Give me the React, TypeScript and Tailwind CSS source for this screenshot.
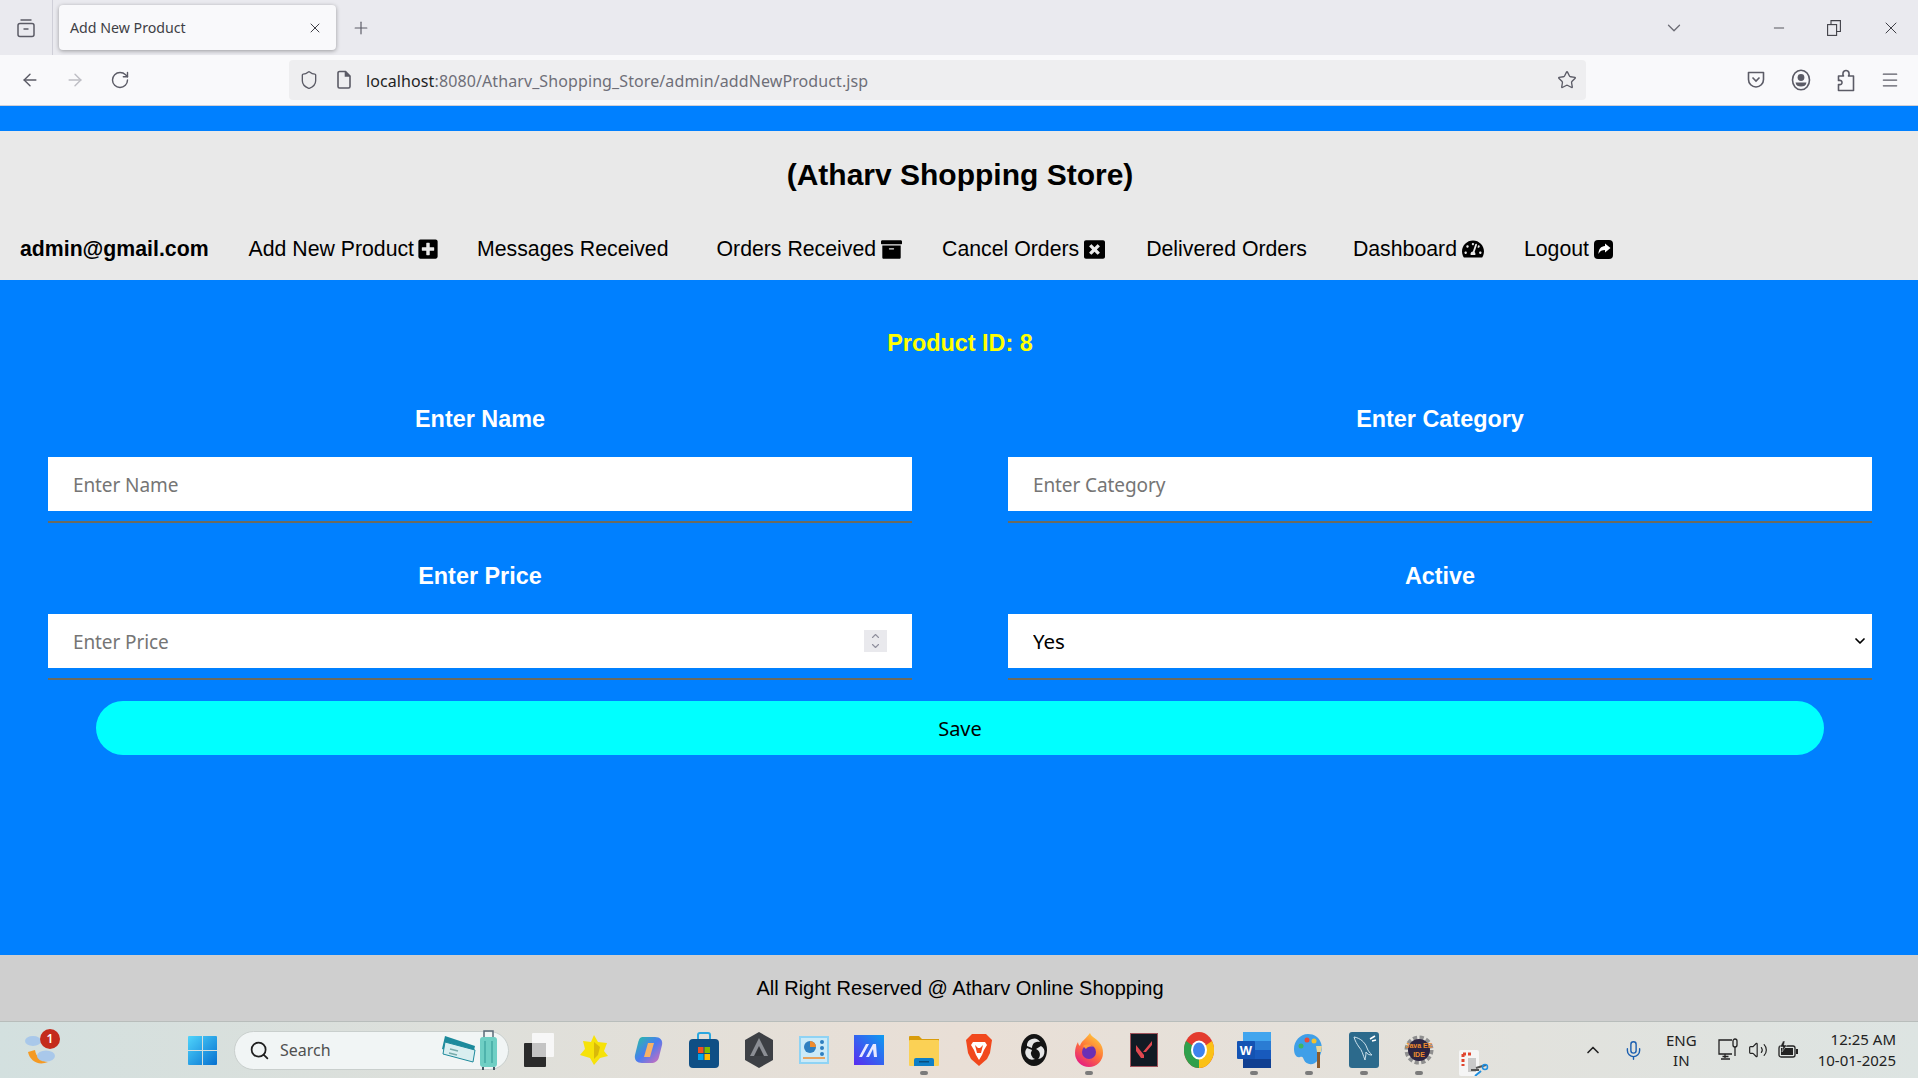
import { ArrowLeft, ArrowRight, ChevronDown, ChevronUp, Menu, Mic, Minus, Plus, RotateCw, Search, Shield, Star, Volume2, X } from "lucide-react";
import { FaArchive, FaPlusSquare, FaTachometerAlt, FaWindowClose } from "react-icons/fa";

const chromeFont = "font-['Noto_Sans',sans-serif]";

function TabsIcon() {
  return (
    <svg width="20" height="20" viewBox="0 0 20 20" fill="none" stroke="#5b5b66" strokeWidth="1.5">
      <rect x="2" y="5.5" width="16" height="13" rx="2" />
      <path d="M4.5 2h11M7.5 11h5" />
    </svg>
  );
}

function RestoreIcon() {
  return (
    <svg width="14" height="16" viewBox="0 0 14 16" fill="none" stroke="#3f3f46" strokeWidth="1.1">
      <rect x="0.600" y="4.600" width="9" height="10.800" />
      <path d="M4 4.500V.6h9.400v10.900H9.600" />
    </svg>
  );
}

function PageIcon() {
  return (
    <svg width="18" height="20" viewBox="0 0 18 20" fill="none" stroke="#5b5b66" strokeWidth="1.6">
      <path d="M3 3a1.5 1.5 0 0 1 1.5-1.5h6l4.500 4.500v10.500a1.500 1.500 0 0 1-1.500 1.500h-9a1.500 1.500 0 0 1-1.500-1.500z" />
      <path d="M10.500 1.500v4.500h4.500" fill="#5b5b66" />
    </svg>
  );
}

function PocketIcon() {
  return (
    <svg width="20" height="20" viewBox="0 0 20 20" fill="none" stroke="#5b5b66" strokeWidth="1.6">
      <path d="M2.500 2.500h15v7a7.500 7.500 0 0 1-15 0z" strokeLinejoin="round" />
      <path d="M6.500 7.500 10 11l3.500-3.500" />
    </svg>
  );
}

function AccountIcon() {
  return (
    <svg width="20" height="22" viewBox="0 0 20 22" fill="none">
      <ellipse cx="10" cy="11" rx="8.500" ry="9.800" stroke="#5b5b66" strokeWidth="1.600" />
      <circle cx="10" cy="8.500" r="3.400" fill="#5b5b66" />
      <path d="M4.500 13.500h11c-.5 3-2.500 4-5.500 4s-5-1-5.500-4z" fill="#5b5b66" />
    </svg>
  );
}

function PuzzleIcon() {
  return (
    <svg width="18" height="24" viewBox="0 0 18 24" fill="none" stroke="#5b5b66" strokeWidth="1.600" strokeLinejoin="round">
      <path d="M1.500 8h5c-1-1.500-1-5.500 2.500-5.500s3.500 4 2.500 5.500h5v14.500h-15v-6c3 .5 3.500-.8 3.500-2s-.5-2.500-3.500-2z" />
    </svg>
  );
}

// solid square with the curved arrow, the logout one in the nav
function LogoutIcon() {
  return (
    <svg width="19" height="19" viewBox="0 0 19 19">
      <rect width="19" height="19" rx="4" fill="#000" />
      <path d="M11 3.500 16.500 8 11 12.500V10c-3 0-5 .8-6.500 4C4.500 9 7 6.200 11 6z" fill="#fff" />
    </svg>
  );
}

function WindowsLogo() {
  return (
    <svg width="29" height="29" viewBox="0 0 29 29">
      <defs>
        <linearGradient id="win" x1="0" y1="0" x2="1" y2="1">
          <stop offset="0" stopColor="#4fd4fb" />
          <stop offset="1" stopColor="#0670d0" />
        </linearGradient>
      </defs>
      <path d="M0 1a1 1 0 0 1 1-1h13v14H0zM15 0h13a1 1 0 0 1 1 1v13H15zM0 15h14v14H1a1 1 0 0 1-1-1zM15 15h14v13a1 1 0 0 1-1 1H15z" fill="url(#win)" />
    </svg>
  );
}

function WeatherIcon() {
  return (
    <svg width="34" height="36" viewBox="0 0 34 36">
      <path d="M4 20c2 9 10 14 20 10-7-1-12-5-13-12z" fill="#f59a23" />
      <ellipse cx="9" cy="9" rx="8" ry="5" fill="#a9c8ea" />
      <ellipse cx="22" cy="24" rx="9" ry="5.500" fill="#a9c8ea" />
    </svg>
  );
}

function TicketsIcon() {
  return (
    <svg width="58" height="42" viewBox="0 0 58 42">
      <path d="M3 7 33 17l-3 13L0 20z" fill="#1d8a9c" />
      <path d="M3 13 33 21l-2 12L1 25z" fill="#d9eef0" stroke="#1d8a9c" />
      <path d="M8 20l8 2M7 24l8 2" stroke="#7aa" strokeWidth="1.500" />
      <rect x="38" y="8" width="17" height="30" rx="3" fill="#6fcfc4" />
      <path d="M42 8V2h9v6" fill="none" stroke="#5b6b78" strokeWidth="1.500" />
      <path d="M43 12v22M50 12v22" stroke="#46aaa4" strokeWidth="1.500" />
      <path d="M41 38v3M52 38v3" stroke="#4a5a66" strokeWidth="2" />
    </svg>
  );
}

function SnapIcon() {
  return (
    <svg width="30" height="34" viewBox="0 0 30 34">
      <rect x="8" y="0" width="22" height="24" rx="1" fill="#f7f7f7" />
      <rect x="0" y="10" width="22" height="24" rx="1" fill="#2b2b2b" />
      <rect x="8" y="10" width="14" height="14" fill="#c4c4c4" />
    </svg>
  );
}

function StarAppIcon() {
  return (
    <svg width="28" height="30" viewBox="0 0 28 30">
      <path d="M14 0l4 7 9 1-3 8 4 5-8 2-6 7-4-7-10-3 5-6-2-8 8 1z" fill="#f6e20a" />
      <path d="M14 7l6 5-2 8-4 4z" fill="#d9b90a" />
    </svg>
  );
}

function CopilotIcon() {
  return (
    <svg width="30" height="30" viewBox="0 0 30 30">
      <defs>
        <linearGradient id="cop" x1="0" y1="0" x2="1" y2="1">
          <stop offset="0" stopColor="#25c2a0" />
          <stop offset="0.5" stopColor="#4a7cf0" />
          <stop offset="1" stopColor="#e56ab3" />
        </linearGradient>
      </defs>
      <path d="M9 2h12c5 0 8 3 7 8l-3 12c-1 4-4 6-8 6H8c-5 0-8-3-7-8l3-12C5 4 6 2 9 2z" fill="url(#cop)" />
      <path d="M10 22l4-14h6l-4 14z" fill="#f7b267" />
    </svg>
  );
}

function StoreIcon() {
  return (
    <svg width="30" height="36" viewBox="0 0 30 36">
      <path d="M9 8V3a2 2 0 0 1 2-2h8a2 2 0 0 1 2 2v5" fill="none" stroke="#2aa7e0" strokeWidth="2" />
      <rect x="0" y="7" width="30" height="29" rx="4" fill="#0f4f85" />
      <rect x="9" y="15" width="5.500" height="6" fill="#f25022" />
      <rect x="15.500" y="15" width="5.500" height="6" fill="#7fba00" />
      <rect x="9" y="22" width="5.500" height="6" fill="#00a4ef" />
      <rect x="15.500" y="22" width="5.500" height="6" fill="#ffb900" />
    </svg>
  );
}

function HexIcon() {
  return (
    <svg width="28" height="36" viewBox="0 0 28 36">
      <path d="M14 0l14 8v20l-14 8-14-8V8z" fill="#3d4045" />
      <path d="M14 6l9 18H5z" fill="#8b8e94" />
      <path d="M14 14l5 10H9z" fill="#34373b" />
    </svg>
  );
}

function ChartAppIcon() {
  return (
    <svg width="30" height="28" viewBox="0 0 30 28">
      <rect width="30" height="28" fill="#8fd3f4" />
      <rect x="2" y="2" width="26" height="24" fill="#cbeaf8" />
      <circle cx="11" cy="11" r="6" fill="#2f7fc0" />
      <path d="M11 11V5a6 6 0 0 1 6 6z" fill="#f08c2e" />
      <circle cx="23" cy="6" r="2" fill="#2f7fc0" />
      <circle cx="23" cy="12" r="2" fill="#2f7fc0" />
      <circle cx="23" cy="18" r="2" fill="#2f7fc0" />
      <path d="M4 22h22" stroke="#f08c2e" strokeWidth="1.500" />
    </svg>
  );
}

function MailspringIcon() {
  return (
    <svg width="30" height="30" viewBox="0 0 30 30">
      <defs>
        <linearGradient id="ma" x1="1" y1="0" x2="0" y2="1">
          <stop offset="0" stopColor="#0d9cf0" />
          <stop offset="1" stopColor="#5a2bf0" />
        </linearGradient>
      </defs>
      <rect width="30" height="30" fill="url(#ma)" />
      <path d="M5 22l7-13h3l-7 13zM12 22l7-13h3l1 13h-3l-1-8-4 8z" fill="#e8e8ff" />
    </svg>
  );
}

function FolderIcon() {
  return (
    <svg width="30" height="32" viewBox="0 0 30 32">
      <path d="M0 3a1 1 0 0 1 1-1h9l3 3h17v5H0z" fill="#d99c0b" />
      <rect x="0" y="6" width="30" height="26" rx="1" fill="#fbd155" />
      <path d="M5 32v-6a2 2 0 0 1 2-2h16a2 2 0 0 1 2 2v6z" fill="#0f7fc7" />
      <rect x="10" y="27" width="10" height="1.500" fill="#0a4f80" />
    </svg>
  );
}

function BraveIcon() {
  return (
    <svg width="26" height="32" viewBox="0 0 26 32">
      <path d="M6 0h14l3 3 3 3-2 13-3 6-8 7-8-7-3-6L0 6l3-3z" fill="#f1481d" />
      <path d="M7 8h12l2 3-3 5-2 5-3 5-3-5-2-5-3-5z" fill="#fff" />
      <path d="M9 11l3 3h2l3-3-2 8h-4z" fill="#f1481d" />
    </svg>
  );
}

function ObsIcon() {
  return (
    <svg width="26" height="32" viewBox="0 0 26 32">
      <ellipse cx="13" cy="16" rx="13" ry="16" fill="#141414" />
      <path d="M6 12a7 7 0 0 1 13-4 6 6 0 0 0-8 6zM20 12a7 7 0 0 1-3 13 6 6 0 0 0-2-10zM6 14a7 7 0 0 0 8 11 6 6 0 0 1-3-9z" fill="#e6e6e6" />
    </svg>
  );
}

function FirefoxIcon() {
  return (
    <svg width="28" height="34" viewBox="0 0 28 34">
      <defs>
        <linearGradient id="ff" x1="0.8" y1="0" x2="0.2" y2="1">
          <stop offset="0" stopColor="#ffd43a" />
          <stop offset="0.5" stopColor="#ff7139" />
          <stop offset="1" stopColor="#e31587" />
        </linearGradient>
      </defs>
      <path d="M15 0c1 4 6 5 9 9 3 3 4 7 4 11a14 14 0 0 1-28 0c0-4 1-8 3-11 0 2 1 3 2 4 1-5 6-7 10-13z" fill="url(#ff)" />
      <circle cx="14" cy="19" r="7" fill="#6b2fb5" />
      <path d="M8 13c3-2 8-2 10 1-3-1-6 0-7 2z" fill="#ff9a3c" />
    </svg>
  );
}

function ValorantIcon() {
  return (
    <svg width="28" height="34" viewBox="0 0 28 34">
      <rect x="0.500" y="0.500" width="27" height="33" fill="#111a24" stroke="#a0545c" />
      <path d="M6 12l8 10v3h-3l-5-7zM22 12l-6 7h-3l9-11z" fill="#e0474f" />
    </svg>
  );
}

function ChromeIcon() {
  return (
    <svg width="30" height="36" viewBox="0 0 30 36">
      <ellipse cx="15" cy="18" rx="15" ry="18" fill="#e33b2e" />
      <path d="M15 18 2 9A15 18 0 0 0 15 36z" fill="#2fa04c" />
      <path d="M15 18V36A15 18 0 0 0 28 9z" fill="#fbc116" />
      <ellipse cx="15" cy="18" rx="8" ry="9.500" fill="#fff" />
      <ellipse cx="15" cy="18" rx="6" ry="7.500" fill="#3f83ed" />
    </svg>
  );
}

function WordIcon() {
  return (
    <svg width="34" height="36" viewBox="0 0 34 36">
      <rect x="6" y="0" width="28" height="9" fill="#41a5ee" />
      <rect x="6" y="9" width="28" height="9" fill="#2b7cd3" />
      <rect x="6" y="18" width="28" height="9" fill="#185abd" />
      <rect x="6" y="27" width="28" height="9" fill="#103f91" />
      <rect x="0" y="9" width="18" height="18" rx="1" fill="#1453b3" />
      <text x="9" y="23" textAnchor="middle" fontSize="13" fontWeight="700" fill="#fff" fontFamily="Liberation Sans, sans-serif">W</text>
    </svg>
  );
}

function PaintIcon() {
  return (
    <svg width="30" height="36" viewBox="0 0 30 36">
      <path d="M14 2C6 2 0 9 0 17c0 6 3 9 6 8 3-1 3 1 4 3 2 5 10 6 14 0 3-6 5-11 3-17-2-6-7-9-13-9z" fill="#3f9fe8" />
      <circle cx="7" cy="14" r="2.500" fill="#3fb562" />
      <circle cx="13" cy="8" r="2.500" fill="#e64a3c" />
      <circle cx="20" cy="9" r="2.500" fill="#f2c230" />
      <path d="M22 14h6l-1 6h-4z" fill="#e8d49a" />
      <rect x="23" y="20" width="3" height="16" fill="#8a5a2b" />
    </svg>
  );
}

function MysqlIcon() {
  return (
    <svg width="30" height="36" viewBox="0 0 30 36">
      <rect width="30" height="36" rx="3" fill="#2c6a8c" />
      <path d="M5 5c6 1 11 5 13 11 1 3 3 5 5 7-3 0-5-1-6-3 0 4-1 7-1 8-2-5-3-10-6-13C8 12 6 9 5 5z" fill="none" stroke="#cfe3ee" strokeWidth="1" />
      <path d="M21 7l5-3M23 9l4-1" stroke="#fff" strokeWidth="1.500" />
    </svg>
  );
}

function GearIcon() {
  return (
    <svg width="30" height="36" viewBox="0 0 30 36">
      <circle cx="15" cy="18" r="12" fill="none" stroke="#8f8f8f" strokeWidth="5" strokeDasharray="4 2.300" />
      <circle cx="15" cy="18" r="11" fill="#2d2440" />
      <text x="15" y="16" textAnchor="middle" fontSize="7" fontWeight="700" fill="#f08c2e" fontFamily="Liberation Sans, sans-serif">Java EE</text>
      <text x="15" y="25" textAnchor="middle" fontSize="7" fontWeight="700" fill="#f08c2e" fontFamily="Liberation Sans, sans-serif">IDE</text>
    </svg>
  );
}

function SnipIcon() {
  return (
    <svg width="30" height="26" viewBox="0 0 30 26" className="translate-y-[13px]">
      <rect x="0" y="0" width="20" height="26" rx="2" fill="#f5f5f5" />
      <path d="M4 4h8M4 4v12" stroke="#e0442e" strokeWidth="3" strokeDasharray="3 2" fill="none" />
      <path d="M9 8h8v14H9z" fill="#c9c9c9" />
      <path d="M12 20h8M17 18l10-3" stroke="#555" strokeWidth="2" />
      <circle cx="26" cy="17" r="2.500" fill="none" stroke="#1f8fe0" strokeWidth="1.500" />
      <path d="M16 26l6-5" stroke="#1f8fe0" strokeWidth="2" />
    </svg>
  );
}

function NetworkIcon() {
  return (
    <svg width="20" height="24" viewBox="0 0 20 24" fill="none" stroke="#222" strokeWidth="1.300">
      <path d="M14 2H1v14h13M7 16v4M3 21h9M4.500 18.500h6" />
      <rect x="15" y="1" width="4" height="8" rx="2" />
      <path d="M17 9v9" />
    </svg>
  );
}

function BatteryIcon() {
  return (
    <svg width="20" height="18" viewBox="0 0 20 18">
      <rect x="1" y="5" width="16" height="11" rx="2" fill="none" stroke="#222" strokeWidth="1.300" />
      <rect x="3" y="7" width="12" height="7" fill="#222" />
      <rect x="18" y="8" width="2" height="5" fill="#222" />
      <path d="M5 0 2 6h3l-1 5 5-7H6l1-4z" fill="#222" stroke="#dfe3e0" strokeWidth="0.500" />
    </svg>
  );
}

const taskApps = [
  { id: "snap", icon: <SnapIcon /> },
  { id: "star", icon: <StarAppIcon /> },
  { id: "copilot", icon: <CopilotIcon /> },
  { id: "store", icon: <StoreIcon /> },
  { id: "hex", icon: <HexIcon /> },
  { id: "chart", icon: <ChartAppIcon /> },
  { id: "mail", icon: <MailspringIcon /> },
  { id: "folder", icon: <FolderIcon />, open: true },
  { id: "brave", icon: <BraveIcon /> },
  { id: "obs", icon: <ObsIcon /> },
  { id: "firefox", icon: <FirefoxIcon />, open: true },
  { id: "valorant", icon: <ValorantIcon /> },
  { id: "chrome", icon: <ChromeIcon /> },
  { id: "word", icon: <WordIcon />, open: true },
  { id: "paint", icon: <PaintIcon />, open: true },
  { id: "mysql", icon: <MysqlIcon />, open: true },
  { id: "gear", icon: <GearIcon />, open: true },
  { id: "snip", icon: <SnipIcon /> },
];

function BrowserChrome() {
  return (
    <div className={`shrink-0 ${chromeFont}`}>
      {/* Tab strip */}
      <div className="flex h-[55px] items-center bg-[#eaeaef]">
        <div className="flex h-full w-[53px] items-center justify-center border-r border-[#cfcfd8]">
          <TabsIcon />
        </div>
        <div className="ml-[6px] flex h-[45px] w-[277px] items-center justify-between rounded-[4px] bg-[#f9f9fb] pl-[11px] pr-[13px] shadow-[0_1px_4px_rgba(0,0,0,0.35)]">
          <span className="pt-[1px] text-[14.200px] text-[#3f3f46]">Add New Product</span>
          <X size={16} strokeWidth={1.5} className="text-[#3f3f46]" />
        </div>
        <Plus size={20} strokeWidth={1.4} className="ml-[15px] text-[#5b5b66]" />
        <ChevronDown size={22} strokeWidth={1.4} className="ml-auto mr-[86px] text-[#6b6b74]" />
        <Minus size={16} strokeWidth={1.3} className="mr-[40px] text-[#3f3f46]" />
        <RestoreIcon />
        <X size={20} strokeWidth={1.2} className="ml-[40px] mr-[17px] text-[#3f3f46]" />
      </div>
      {/* Toolbar */}
      <div className="flex h-[51px] items-center border-b border-[#cfcfd8] bg-[#f9f9fb] pb-[1px]">
        <div className="flex w-[289px] items-center gap-[25px] pl-[20px]">
          <ArrowLeft size={20} strokeWidth={1.7} className="text-[#5b5b66]" />
          <ArrowRight size={20} strokeWidth={1.7} className="text-[#bdbdc4]" />
          <RotateCw size={20} strokeWidth={1.7} className="text-[#5b5b66]" />
        </div>
        <div className="flex h-[40px] w-[1297px] items-center rounded-[4px] bg-[#eeeef0] pl-[10px] pr-[9px]">
          <Shield size={20} strokeWidth={1.6} className="text-[#5b5b66]" />
          <span className="ml-[16px]">
            <PageIcon />
          </span>
          <span className="ml-[13px] pt-[3px] text-[16px] tracking-[0.1px] text-[#1f1f24]">
            localhost<span className="text-[#6e6e78]">:8080/Atharv_Shopping_Store/admin/addNewProduct.jsp</span>
          </span>
          <Star size={20} strokeWidth={1.6} className="ml-auto text-[#5b5b66]" />
        </div>
        <div className="flex flex-1 items-center justify-end gap-[25px] pr-[18px]">
          <PocketIcon />
          <span className="mr-[1px]">
            <AccountIcon />
          </span>
          <PuzzleIcon />
          <Menu size={20} strokeWidth={1.5} className="text-[#5b5b66]" />
        </div>
      </div>
    </div>
  );
}

function NavLink({ label, icon, className = "" }: { label: string; icon?: React.ReactNode; className?: string }) {
  return (
    <span className={`flex items-center gap-[5px] text-[21.280px] text-black ${className}`}>
      {label}
      {icon}
    </span>
  );
}

function FormField({ label, children }: { label: string; children: React.ReactNode }) {
  return (
    <div className="flex w-[864px] flex-col items-center">
      <div className="flex h-[50px] items-center pt-[2px] text-[23.400px] font-bold text-white">{label}</div>
      <div className="relative mt-[13px] h-[54px] w-full bg-white">{children}</div>
      <div className="mt-[10px] h-[2px] w-full bg-[#6b6b5e]" />
    </div>
  );
}

const inputClass = `h-full w-full bg-white pl-[25px] pt-[1px] text-[19px] tracking-[-0.1px] text-black outline-none placeholder:text-[#757575] ${chromeFont}`;

export default function App() {
  return (
    <div className="flex h-[1078px] w-[1918px] flex-col overflow-hidden font-['Liberation_Sans',Arial,sans-serif]">
      <BrowserChrome />

      <div className="h-[25px] shrink-0 bg-[#0080ff]" />

      {/* Site header */}
      <header className="h-[149px] shrink-0 bg-[#e9e9e9]">
        <h1 className="flex h-[86px] items-center justify-center pl-[2px] text-[30px] font-bold text-black">
          (Atharv Shopping Store)
        </h1>
        <nav className="flex h-[63px] items-center gap-[40px] pt-[2px] pl-[20px]">
          <span className="text-[21.280px] font-bold text-black">admin@gmail.com</span>
          <NavLink label="Add New Product" icon={<FaPlusSquare size={22} className="-ml-[2px]" />} />
          <NavLink label="Messages Received" className="-ml-[2px]" />
          <NavLink label="Orders Received" className="ml-[8px]" icon={<FaArchive size={21} />} />
          <NavLink label="Cancel Orders" icon={<FaWindowClose size={21} />} />
          <NavLink label="Delivered Orders" className="ml-[1px]" />
          <NavLink label="Dashboard" className="ml-[6px]" icon={<FaTachometerAlt size={22} />} />
          <NavLink label="Logout" icon={<LogoutIcon />} />
        </nav>
      </header>

      {/* Form */}
      <main className="flex-1 bg-[#0080ff]">
        <div className="flex h-[126px] items-center justify-center pt-[3px] pb-[2px] pl-[2px] text-[23.400px] font-bold text-[#ffff00]">
          Product ID: 8
        </div>
        <div className="-mt-[12px] flex justify-between pl-[48px] pr-[46px]">
          <FormField label="Enter Name">
            <input className={inputClass} placeholder="Enter Name" />
          </FormField>
          <FormField label="Enter Category">
            <input className={inputClass} placeholder="Enter Category" />
          </FormField>
        </div>
        <div className="mt-[28px] flex justify-between pl-[48px] pr-[46px]">
          <FormField label="Enter Price">
            <input className={inputClass} placeholder="Enter Price" />
            <div className="absolute right-[25px] top-[16px] flex h-[22px] w-[23px] flex-col items-center justify-center bg-[#e9e9ed] text-[#8f8f9d]">
              <ChevronUp size={13} strokeWidth={2.2} className="-mb-[2px]" />
              <ChevronDown size={13} strokeWidth={2.2} />
            </div>
          </FormField>
          <FormField label="Active">
            <select className={`${inputClass} appearance-none text-[20.500px]`} defaultValue="Yes">
              <option>Yes</option>
              <option>No</option>
            </select>
            <ChevronDown size={16} strokeWidth={2.6} className="pointer-events-none absolute right-[4px] top-[19px] text-black" />
          </FormField>
        </div>
        <div className="mt-[21px] pl-[96px] pr-[94px]">
          <button className={`h-[54px] w-full rounded-[27px] bg-[#00ffff] pt-[1px] text-[20px] text-black ${chromeFont}`}>Save</button>
        </div>
      </main>

      {/* Page footer */}
      <footer className="flex h-[66px] shrink-0 items-center justify-center bg-[#cfcfcf] pl-[2px] text-[20px] text-black">
        All Right Reserved @ Atharv Online Shopping
      </footer>

      {/* Windows taskbar */}
      <div
        className={`flex h-[57px] shrink-0 items-center overflow-hidden border-t border-[#b8bdbb] bg-gradient-to-r from-[#d3e0df] via-[#e9dfd6] to-[#dde4e2] ${chromeFont}`}
      >
        <div className="relative ml-[24px] w-[34px]">
          <WeatherIcon />
          <span className="absolute -right-[2px] -top-[3px] flex h-[20px] w-[20px] items-center justify-center rounded-full bg-[#c42b1c] text-[12px] font-semibold text-white">
            1
          </span>
        </div>
        <div className="ml-[130px]">
          <WindowsLogo />
        </div>
        <div className="ml-[17px] flex h-[39px] w-[275px] items-center rounded-full border border-[#c9cfcd] bg-[#f1f5f5] pl-[14px] pr-[8px]">
          <Search size={21} strokeWidth={2} className="text-[#1f1f1f]" />
          <span className="ml-[10px] text-[16px] text-[#505050]">Search</span>
          <span className="ml-auto">
            <TicketsIcon />
          </span>
        </div>
        <div className="ml-[2px] flex">
          {taskApps.map((app) => (
            <div key={app.id} className="relative flex h-[50px] w-[55px] items-center justify-center">
              {app.icon}
              {app.open && <span className="absolute bottom-[0px] h-[4px] w-[8px] rounded-full bg-[#7b7b7b]" />}
            </div>
          ))}
        </div>
        <ChevronUp size={20} strokeWidth={2} className="ml-auto text-[#222]" />
        <Mic size={21} strokeWidth={1.6} className="ml-[20px] text-[#1b5fb0]" />
        <div className="ml-[22px] flex flex-col items-center text-[15px] leading-[20px] text-[#222]">
          <span>ENG</span>
          <span>IN</span>
        </div>
        <div className="ml-[21px] mr-[1px] flex items-center gap-[10px]">
          <NetworkIcon />
          <Volume2 size={20} strokeWidth={1.4} className="text-[#222]" />
          <BatteryIcon />
        </div>
        <div className="ml-[19px] mr-[22px] flex flex-col items-end text-[15px] leading-[21px] text-[#222]">
          <span>12:25 AM</span>
          <span>10-01-2025</span>
        </div>
      </div>
    </div>
  );
}
